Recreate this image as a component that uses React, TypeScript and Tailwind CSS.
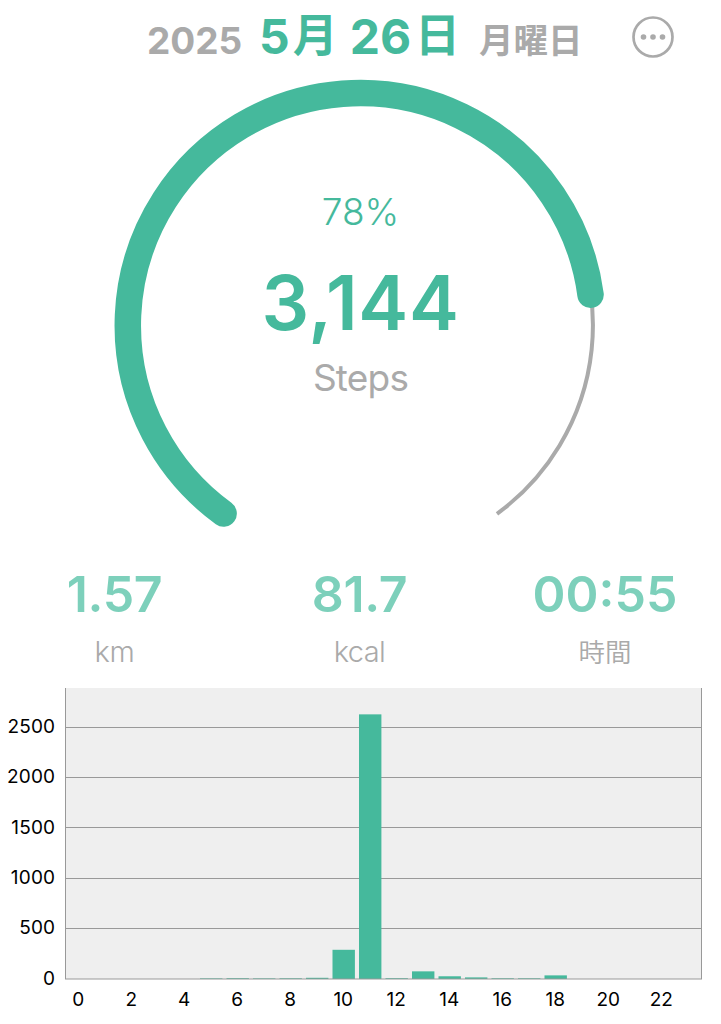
import React from 'react';

interface Stat {
    value: string;
    unit: string;
    className: string;
    unitClass: string;
}

const STEPS = 3144;
const GOAL = 4000;

const stats: Stat[] = [
    { value: "1.57", unit: "km", className: "w-[229px] tracking-[-0.3px]", unitClass: "text-[29px] font-[350] tracking-[-0.3px]" },
    { value: "81.7", unit: "kcal", className: "w-[261px] tracking-[-0.3px]", unitClass: "text-[29px] font-[350] tracking-[-0.6px]" },
    { value: "00:55", unit: "時間", className: "w-[230px] tracking-[0px]", unitClass: "text-[26.5px] font-[350] tracking-normal" },
];

const hourly = [0, 0, 0, 0, 0, 6, 8, 6, 7, 12, 290, 2628, 8, 76, 27, 16, 7, 7, 36, 0, 0, 0, 0, 0];
const yTicks = [0, 500, 1000, 1500, 2000, 2500];

function polar(angle: number, radius: number) {
    const rad = (angle * Math.PI) / 180;
    return `${360.2 + radius * Math.sin(rad)} ${325.5 - radius * Math.cos(rad)}`;
}

function ProgressRing() {
    const start = 216;
    const end = start + 288 * (STEPS / GOAL);

    return (
        <svg className="col-start-1 row-start-1" width="721" height="470" viewBox="0 70 721 470" fill="none">
            <path d={`M${polar(start, 232.7)} A232.7 232.7 0 1 1 ${polar(144, 232.7)}`} stroke="#aaaaaa" strokeWidth="4" />
            <path
                d={`M${polar(start, 232.4)} A232.4 232.4 0 1 1 ${polar(end, 232.4)}`}
                stroke="#45b99c"
                strokeWidth="26.5"
                strokeLinecap="round"
            />
        </svg>
    );
}

function HourlyChart() {
    const left = 65.5;
    const band = 26.5;
    const base = 979;
    const y = (value: number) => base - (value * 50.35) / 500;

    return (
        <svg width="721" height="344" viewBox="0 680 721 344" fontSize="19" fill="#000000">
            <rect x={left} y="688" width="636" height="291" fill="#efefef" />
            {yTicks.map((tick) => (
                <g key={tick}>
                    {tick > 0 && <path d={`M65 ${Math.floor(y(tick)) + 0.5}H702`} stroke="#999999" strokeWidth="1" />}
                    <text x="55.3" y={y(tick) + 5.7} textAnchor="end" letterSpacing="0.2">{tick}</text>
                </g>
            ))}
            <path d="M65.5 688V979M701.5 688V979" stroke="#999999" strokeWidth="1" />
            {hourly.map((value, hour) => (
                <React.Fragment key={hour}>
                    {value > 0 && (
                        <rect x={left + hour * band + 2} y={y(value)} width="22.4" height={base - y(value)} fill="#45b99c" />
                    )}
                    {hour % 2 === 0 && (
                        <text x={left + (hour + 0.5) * band - 0.5} y="1006" textAnchor="middle">{hour}</text>
                    )}
                </React.Fragment>
            ))}
            <path d="M65 979H702" stroke="#999999" strokeWidth="1" />
        </svg>
    );
}

export default function App() {
    return (
        <main className="flex h-[1024px] w-[721px] flex-col overflow-hidden bg-white font-['Inter','Noto_Sans_CJK_JP',sans-serif] text-[#aaaaaa]">
            <header className="flex h-[70px] shrink-0 items-baseline pl-[147px] leading-[74px] whitespace-nowrap">
                <span className="w-[112px] text-[37px] font-bold">2025</span>
                <h1 className="w-[220px] text-[48px] font-bold text-[#45b99c]">
                    5<span className="ml-[3px] align-[2px] text-[45px] leading-none">月</span>
                    <span className="ml-[12px]">26</span>
                    <span className="ml-[4px] align-[2px] text-[45px] leading-none">日</span>
                </h1>
                <span className="w-[152px] text-[34.5px]">
                    <span className="align-[1px] leading-none font-bold">月曜日</span>
                </span>
                <button aria-label="More" className="mt-[15px] self-start">
                    <svg width="44" height="44" viewBox="0 0 44 44" fill="none">
                        <circle cx="22" cy="22" r="19.5" stroke="#aaaaaa" strokeWidth="2.7" />
                        <g fill="#aaaaaa">
                            <circle cx="12.5" cy="22" r="2.8" />
                            <circle cx="22" cy="22" r="2.8" />
                            <circle cx="31.5" cy="22" r="2.8" />
                        </g>
                    </svg>
                </button>
            </header>

            <section className="grid h-[470px] shrink-0">
                <ProgressRing />
                <div className="col-start-1 row-start-1 flex flex-col items-center pt-[117px]">
                    <p className="text-[37px] leading-[50px] font-[350] text-[#45b99c]">78%</p>
                    <p className="mt-[21px] text-[75px] leading-[90px] font-semibold tracking-[0.6px] text-[#45b99c]">{STEPS.toLocaleString("en-US")}</p>
                    <p className="mt-[5px] text-[37px] leading-[50px] tracking-[-0.8px]">Steps</p>
                </div>
            </section>

            <section className="flex h-[140px] shrink-0 pt-[24px]">
                {stats.map((stat) => (
                    <div key={stat.unit} className={`flex flex-col items-center ${stat.className}`}>
                        <p className="text-[50px] leading-[60px] font-semibold text-[#7dd0bb]">{stat.value}</p>
                        <p className={`mt-[8px] leading-[40px] ${stat.unitClass}`}>{stat.unit}</p>
                    </div>
                ))}
            </section>

            <HourlyChart />
        </main>
    );
}
